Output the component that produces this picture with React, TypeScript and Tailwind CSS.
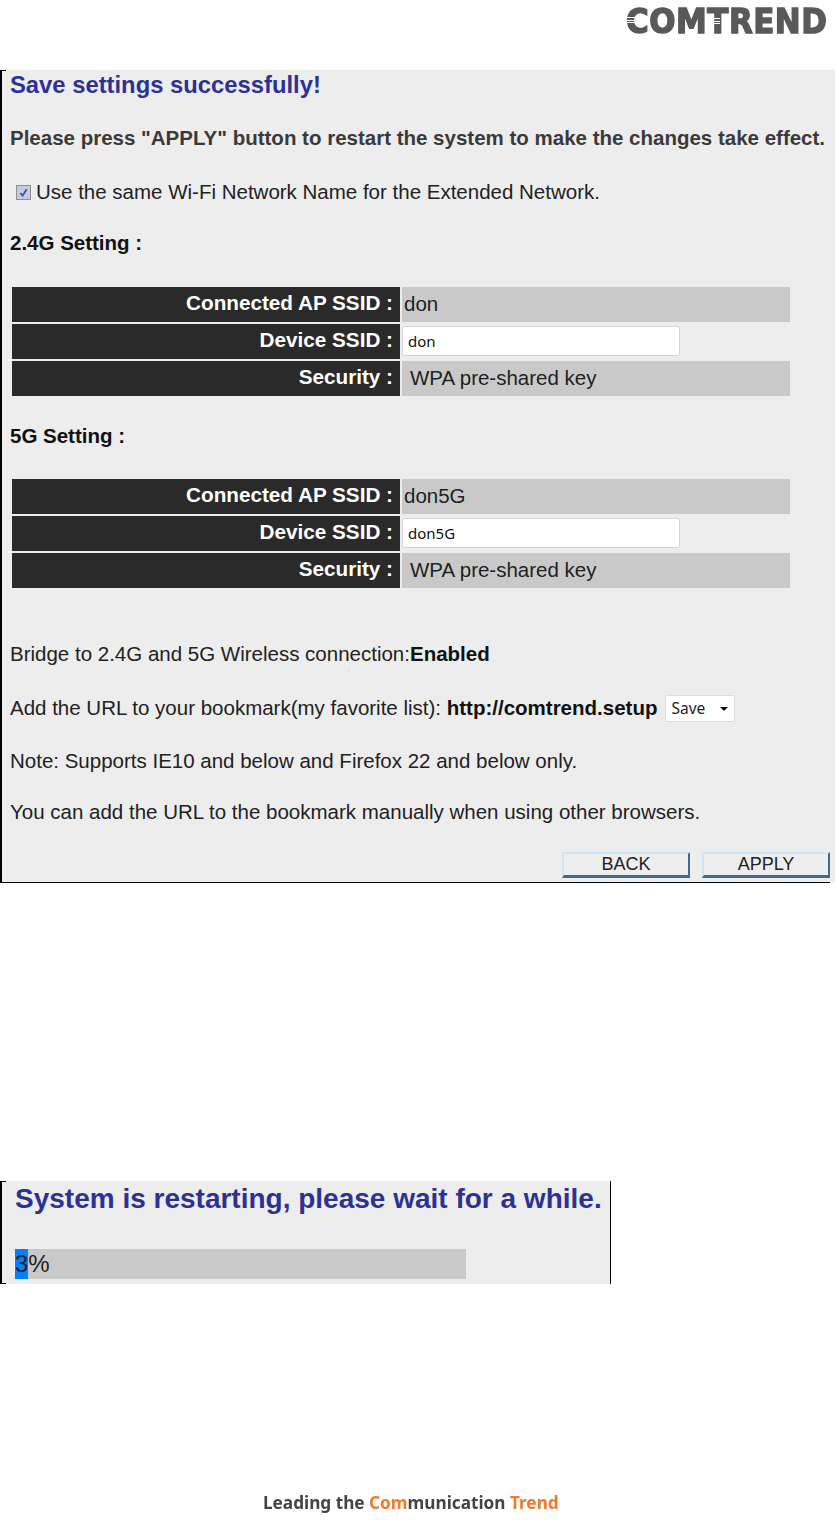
import React from "react";

const arial = "font-['Liberation_Sans',Arial,sans-serif]";

function Label({ text }: { text: string }) {
  return (
    <div className="w-[388px] bg-[#2a2a2a] flex items-center justify-end pr-[7px] pb-[4px] text-white font-bold text-[20.7px]">
      {text} :
    </div>
  );
}

function Row({ label, children }: { label: string; children: React.ReactNode }) {
  return (
    <div className="flex h-[35px] gap-[2px]">
      <Label text={label} />
      <div className="w-[388px] bg-[#c9c9c9] flex items-center text-[20.5px] text-[#222]">{children}</div>
    </div>
  );
}

function SettingTable({ ap, ssid }: { ap: string; ssid: string }) {
  return (
    <div className="ml-[10px] flex flex-col gap-[2px]">
      <Row label="Connected AP SSID">
        <span className="pl-[2px]">{ap}</span>
      </Row>
      <div className="flex h-[35px] gap-[2px]">
        <Label text="Device SSID" />
        <div className="w-[388px] flex items-center pb-[2px]">
          <div className="w-[278px] h-[30px] bg-white border border-[#d4d4da] rounded-[2px] flex items-center pl-[5px] pt-[1px] font-['Noto_Sans',sans-serif] text-[15px] text-[#111]">
            {ssid}
          </div>
        </div>
      </div>
      <Row label="Security">
        <span className="pl-[8px]">WPA pre-shared key</span>
      </Row>
    </div>
  );
}

function Btn({ label }: { label: string }) {
  return (
    <div className="w-[128px] h-[26px] bg-[#ededed] border-t-2 border-l-2 border-r-2 border-b-[3px] border-t-[#cfe6f7] border-l-[#cfe6f7] border-r-[#41698c] border-b-[#41698c] flex items-center justify-center text-[18px] text-[#222]">
      {label}
    </div>
  );
}

function Stripes({ className }: { className: string }) {
  return (
    <div className={`absolute flex flex-col gap-[1.5px] ${className}`}>
      <div className="h-[1px] bg-white" />
      <div className="h-[1px] bg-white" />
      <div className="h-[1px] bg-white" />
    </div>
  );
}

export default function App() {
  return (
    <div className={`${arial} w-[835px] h-[1527px] bg-white flex flex-col overflow-hidden`}>
      <header className="h-[70px] flex justify-end pr-[7px] pt-[1px]">
        <div className="relative h-[40px] w-[202px] flex items-center justify-center font-['DejaVu_Sans',sans-serif] font-bold text-[30px] tracking-[0.5px] text-[#58595b] [-webkit-text-stroke:1.3px_#58595b] whitespace-nowrap">
          <span className="scale-x-[1.03] scale-y-[1.14]">COMTREND</span>
          <Stripes className="left-[0px] top-[16px] w-[10px]" />
          <Stripes className="left-[87px] top-[17px] w-[7px]" />
        </div>
      </header>

      <section className="relative h-[813px] bg-[#ededed] border-l-2 border-b border-black text-[20.5px] text-[#222]">
        <div className="absolute -left-[2px] top-0 w-[6px] h-[1px] bg-black" />
        <div className="absolute right-0 bottom-[-1px] w-[5px] h-[1px] bg-white" />
        <h1 className="pl-[8px] h-[30px] font-bold text-[23.8px] leading-[30px] text-[#2e3192]">
          Save settings successfully!
        </h1>
        <p className="pl-[8px] mt-[26px] h-[24px] leading-[24px] font-bold text-[#3a3a3a] whitespace-nowrap">
          Please press "APPLY" button to restart the system to make the changes take effect.
        </p>
        <div className="pl-[14px] mt-[30px] h-[24px] flex items-center gap-[5px]">
          <div className="w-[15px] h-[15px] bg-[#c5cbe0] border border-[#8e8e8e] flex items-center justify-center">
            <svg viewBox="0 0 12 12" className="w-[11px] h-[11px]">
              <path d="M2.5 6.5 L5 9.5 L9.5 2.5" fill="none" stroke="#3c4a9a" strokeWidth="1.8" />
            </svg>
          </div>
          <span className="whitespace-nowrap">Use the same Wi-Fi Network Name for the Extended Network.</span>
        </div>
        <h2 className="pl-[8px] mt-[27px] h-[24px] leading-[24px] font-bold text-[#111]">2.4G Setting :</h2>
        <div className="mt-[32px]">
          <SettingTable ap="don" ssid="don" />
        </div>
        <h2 className="pl-[8px] mt-[28px] h-[24px] leading-[24px] font-bold text-[#111]">5G Setting :</h2>
        <div className="mt-[31px]">
          <SettingTable ap="don5G" ssid="don5G" />
        </div>
        <p className="pl-[8px] mt-[54px] h-[24px] leading-[24px] whitespace-nowrap">
          Bridge to 2.4G and 5G Wireless connection:<b className="text-[#111]">Enabled</b>
        </p>
        <div className="pl-[8px] mt-[28px] h-[28px] flex items-center whitespace-nowrap">
          <span>Add the URL to your bookmark(my favorite list):&nbsp;</span>
          <b className="text-[#111]">http://comtrend.setup</b>
          <div className="ml-[8px] w-[70px] h-[27px] bg-white border border-[#dcdcdc] rounded-[2px] flex items-center justify-between pl-[5px] pr-[6px] pt-[2px] font-['Noto_Sans',sans-serif] text-[15.5px]">
            Save
            <div className="w-0 h-0 border-l-[4px] border-r-[4px] border-t-[4px] border-l-transparent border-r-transparent border-t-[#111]" />
          </div>
        </div>
        <p className="pl-[8px] mt-[27px] h-[24px] leading-[24px] whitespace-nowrap">
          Note: Supports IE10 and below and Firefox 22 and below only.
        </p>
        <p className="pl-[8px] mt-[27px] h-[24px] leading-[24px] whitespace-nowrap">
          You can add the URL to the bookmark manually when using other browsers.
        </p>
        <div className="mt-[28px] pr-[5px] flex justify-end gap-[12px]">
          <Btn label="BACK" />
          <Btn label="APPLY" />
        </div>
      </section>

      <section className="relative mt-[298px] w-[611px] h-[103px] bg-[#ededed] border-l-2 border-r border-black">
        <div className="absolute -left-[2px] top-0 w-[6px] h-[1px] bg-black" />
        <div className="absolute -left-[2px] bottom-0 w-[6px] h-[1px] bg-black" />
        <h1 className="pl-[13px] pt-[1px] h-[36px] leading-[34px] font-bold text-[28px] text-[#2e3192] whitespace-nowrap">
          System is restarting, please wait for a while.
        </h1>
        <div className="ml-[13px] mt-[32px] w-[451px] h-[30px] bg-[#c9c9c9] relative flex items-center text-[24px] text-[#222]">
          <div className="absolute left-0 top-0 w-[13px] h-full bg-[#0080ff]" />
          <span className="relative">3%</span>
        </div>
      </section>

      <footer className="mt-[205px] pl-[263px] h-[28px] flex items-center font-['Noto_Sans',sans-serif] font-bold text-[17.2px] text-[#444] whitespace-nowrap blur-[0.4px]">
        Leading the&nbsp;<span className="text-[#f07a2c]">Com</span>munication&nbsp;<span className="text-[#f07a2c]">Trend</span>
      </footer>
    </div>
  );
}
